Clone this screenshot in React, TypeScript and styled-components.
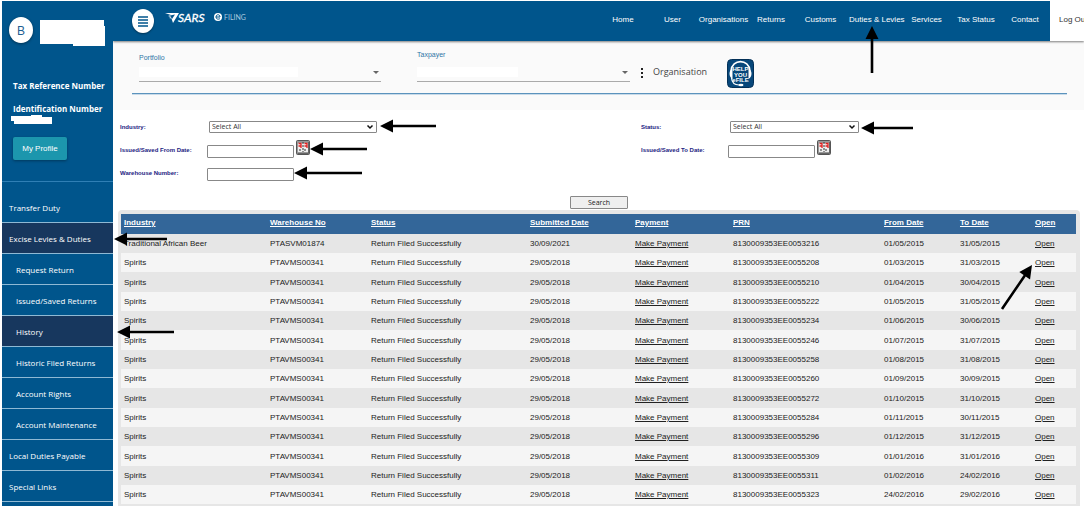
import React from 'react';
import styled, { createGlobalStyle } from 'styled-components';

const arial = '"Liberation Sans", Arial, sans-serif';
const humanist = '"Open Sans", "Noto Sans", sans-serif';

const Global = createGlobalStyle`
  * { box-sizing: border-box; }
  body { margin: 0; background: #fff; font-family: ${arial}; font-size: 8px; color: #222; }
  button, input, select { font: inherit; }
  a { color: inherit; }
`;

const Page = styled.div`
  position: relative;
  display: flex;
  height: 100vh;
  padding: 1px 3px 6px 2px;
  overflow: hidden;
`;

const Sidebar = styled.aside`
  flex: 0 0 111px;
  background: #00558c;
  color: #fff;
  overflow: hidden;
  font-family: ${humanist};
`;

const Profile = styled.section`
  display: flex;
  flex-direction: column;
  align-items: flex-start;
  height: 181px;
  padding: 14px 6px 0 7px;
  border-bottom: 1px solid #2f7fb5;
`;

const Identity = styled.div`
  display: flex;
  gap: 7px;
  height: 59px;
`;

const Avatar = styled.div`
  width: 24px;
  height: 26px;
  margin-top: 2px;
  border-radius: 50%;
  background: #fff;
  color: #1d5f92;
  font: 12px/28px ${arial};
  text-align: center;
  box-shadow: 0 1px 3px rgba(0, 0, 0, 0.4);
`;

const FieldName = styled.p`
  margin: 0;
  padding: 0 4px;
  font-size: 8px;
  font-weight: 700;
  line-height: 23px;
  white-space: nowrap;
`;

const HiddenNumber = styled.svg`
  display: block;
  margin: -5px 0 12px 2px;
`;

const ProfileButton = styled.button`
  width: 54px;
  height: 23px;
  margin-left: 4px;
  padding: 0;
  border: 0;
  border-radius: 2px;
  background: #1c96ad;
  color: #fff;
  font-family: ${arial};
  font-size: 8px;
  box-shadow: 0 1px 3px rgba(0, 0, 0, 0.35);
`;

const SideNav = styled.nav`
  padding-top: 10px;
`;

const SideLink = styled.a<{ $sub?: boolean; $active?: boolean }>`
  display: block;
  height: 31px;
  padding-left: ${(p) => (p.$sub ? 14 : 7)}px;
  border-bottom: 1px solid #8fb9d4;
  background: ${(p) => (p.$active ? '#17375e' : 'transparent')};
  font-size: 8px;
  line-height: 32px;
  text-decoration: none;
  white-space: nowrap;
`;

const Main = styled.main`
  flex: 1;
  min-width: 0;
  overflow: hidden;
`;

const TopBar = styled.header`
  position: relative;
  display: flex;
  height: 40px;
  background: #00558c;
  color: #fff;
  box-shadow: 0 1px 2px rgba(0, 0, 0, 0.5);
`;

const Brand = styled.div`
  display: flex;
  flex: 1;
  gap: 11px;
  padding: 8px 0 0 19px;
`;

const MenuButton = styled.button`
  width: 22px;
  height: 24px;
  padding: 0;
  border: 0;
  border-radius: 50%;
  background: #fff;
  box-shadow: 0 1px 2px rgba(0, 0, 0, 0.4);
  svg { display: block; margin: 0 auto; }
`;

const TopNav = styled.nav`
  display: grid;
  grid-template-columns: 50px 49px 53px 42px 57px 52px 51px 48px 50px;
  font-size: 8px;
  line-height: 38px;
  text-align: center;
  white-space: nowrap;
  a { text-decoration: none; }
`;

const LogOut = styled.a`
  width: 34px;
  padding-left: 9px;
  overflow: hidden;
  background: #fff;
  color: #333;
  font: 8px/38px ${arial};
  white-space: nowrap;
  text-decoration: none;
`;

const Context = styled.section`
  height: 69px;
  padding: 10px 17px 0 19px;
  background: #fafafa;
`;

const ContextRow = styled.div`
  display: flex;
  height: 43px;
  padding-left: 7px;
  border-bottom: 1px solid #5b93bd;
  box-shadow: 0 1px #c9dbe9;
`;

const Picker = styled.div<{ $w: number; $top: number; $gap: number }>`
  display: flex;
  flex-direction: column;
  justify-content: space-between;
  width: ${(p) => p.$w}px;
  height: 31px;
  margin-right: ${(p) => p.$gap}px;
  padding-top: ${(p) => p.$top}px;
  border-bottom: 1px solid #aaa;
  color: #2f76a6;
  font: 7px/8px ${arial};
`;

const PickerValue = styled.div`
  display: flex;
  align-items: center;
  justify-content: space-between;
  height: 18px;
`;

const Blank = styled.span<{ $w: number }>`
  width: ${(p) => p.$w}px;
  height: 10px;
  background: #fff;
`;

const Caret = styled.span`
  margin-right: 2px;
  border: 3px solid transparent;
  border-top-color: #666;
  border-bottom: 0;
`;

const OrgLabel = styled.span`
  margin: 0 20px 0 9px;
  color: #444;
  font: 9px/42px ${humanist};
`;

const HelpSlot = styled.div`
  padding-top: 8px;
`;

const Filters = styled.form`
  display: grid;
  grid-template-columns: 521px 1fr;
  padding: 5px 3px 0 7px;
`;

const Field = styled.div`
  display: flex;
  align-items: center;
  height: 23px;
`;

const Label = styled.label`
  width: 87px;
  color: #22227f;
  font: bold 6px/10px ${arial};
  white-space: nowrap;
`;

const SelectBox = styled.div<{ $w: number }>`
  display: flex;
  align-items: center;
  width: ${(p) => p.$w}px;
  margin-left: 2px;
  select {
    width: 100%;
    height: 12px;
    padding: 0 2px;
    border: 1px solid #888;
    border-radius: 1px;
    background: #fff;
    color: #333;
    appearance: none;
    font: 7px/9px ${humanist};
  }
  svg { flex: none; margin-left: -11px; pointer-events: none; }
`;

const TextBox = styled.input`
  width: 87px;
  height: 13px;
  margin-top: 4px;
  padding: 0 2px;
  border: 1px solid #888;
  border-radius: 1px;
  background: #fff;
`;

const CalendarButton = styled.button`
  display: block;
  margin: 0 0 4px 2px;
  padding: 0;
  border: 0;
  background: none;
  svg { display: block; }
`;

const SearchButton = styled.button`
  display: block;
  width: 58px;
  height: 13px;
  margin: 12px auto 1px 457px;
  padding: 0;
  border: 1px solid #888;
  border-radius: 1px;
  background: #efefef;
  color: #222;
  font: 7px/10px ${humanist};
`;

const TableFrame = styled.div`
  margin: 0 4px 0 5px;
  padding: 4px 4px 4px 3px;
  border-radius: 4px 4px 0 0;
  background: #e6e6e6;
`;

const Table = styled.table`
  width: 100%;
  border-collapse: collapse;
  table-layout: fixed;
  font: 8px/19px ${arial};
  color: #222;
  white-space: nowrap;
  th, td { height: 19px; padding: 0 0 0 3px; text-align: left; }
  th { height: 20px; padding-bottom: 2px; background: #336699; color: #fff; line-height: 18px; }
  tbody tr:nth-child(even) { background: #f5f5f5; }
  tbody tr:nth-child(3n) td { height: 20px; }
`;

const Annotations = styled.svg`
  position: absolute;
  top: 0;
  left: 0;
  pointer-events: none;
`;

const columns: [string, number][] = [
  ['Industry', 146], ['Warehouse No', 101], ['Status', 159], ['Submitted Date', 105],
  ['Payment', 98], ['PRN', 151], ['From Date', 76], ['To Date', 75], ['Open', 44],
];

const rows: string[][] = [
  ['53216', '01/05/2015', '31/05/2015'],
  ['55208', '01/03/2015', '31/03/2015'],
  ['55210', '01/04/2015', '30/04/2015'],
  ['55222', '01/05/2015', '31/05/2015'],
  ['55234', '01/06/2015', '30/06/2015'],
  ['55246', '01/07/2015', '31/07/2015'],
  ['55258', '01/08/2015', '31/08/2015'],
  ['55260', '01/09/2015', '30/09/2015'],
  ['55272', '01/10/2015', '31/10/2015'],
  ['55284', '01/11/2015', '30/11/2015'],
  ['55296', '01/12/2015', '31/12/2015'],
  ['55309', '01/01/2016', '31/01/2016'],
  ['55311', '01/02/2016', '24/02/2016'],
  ['55323', '24/02/2016', '29/02/2016'],
];

const sideItems: { text: string; sub?: boolean; active?: boolean }[] = [
  { text: 'Transfer Duty' },
  { text: 'Excise Levies & Duties', active: true },
  { text: 'Request Return', sub: true },
  { text: 'Issued/Saved Returns', sub: true },
  { text: 'History', sub: true, active: true },
  { text: 'Historic Filed Returns', sub: true },
  { text: 'Account Rights', sub: true },
  { text: 'Account Maintenance', sub: true },
  { text: 'Local Duties Payable' },
  { text: 'Special Links' },
];

const navItems = ['Home', 'User', 'Organisations', 'Returns', 'Customs', 'Duties & Levies', 'Services', 'Tax Status', 'Contact'];

// Tail x/y followed by tip x/y
const arrows: [number, number, number, number][] = [
  [872, 73, 872, 26],
  [436, 126, 380, 126],
  [367, 149, 310, 149],
  [362, 173, 294, 173],
  [913, 128, 861, 128],
  [167, 239, 114, 239],
  [174, 332, 117, 332],
  [1002, 309, 1032, 265],
];

function Arrow({ points: [x1, y1, x2, y2] }: { points: [number, number, number, number] }) {
  const length = Math.hypot(x2 - x1, y2 - y1);
  const angle = (Math.atan2(y2 - y1, x2 - x1) * 180) / Math.PI;
  return (
    <g transform={`translate(${x1} ${y1}) rotate(${angle})`}>
      <path d={`M0 -1.3H${length - 13}V-6.5L${length} 0L${length - 13} 6.5V1.3H0Z`} fill="#000" />
    </g>
  );
}

function Logo() {
  return (
    <svg width="86" height="18" viewBox="0 0 86 18" aria-label="SARS eFiling">
      <path d="M0 4L14 4L8 14L6.500 9.500L4 9L6 8L3 7L6 6Z" fill="#fff" />
      <path d="M5 6.500L10 5.500L7 10Z" fill="#00558c" />
      <text x="13" y="13" fill="#fff" stroke="#fff" strokeWidth="0.3" fontFamily="Lato" fontSize="12" fontStyle="italic">SARS</text>
      <circle cx="53" cy="8" r="4" fill="#fff" />
      <path d="M51 8H55C55 5 51 5 51 8C51 10.500 54 10.500 55 9.500" fill="none" stroke="#00558c" strokeWidth="1" />
      <text x="59" y="11" fill="#a9c9df" fontFamily="Lato" fontSize="7">FILING</text>
    </svg>
  );
}

function HelpIcon() {
  return (
    <svg width="27" height="29" viewBox="0 0 27 29" aria-label="Help you eFile">
      <rect x="0.500" y="0.500" width="26" height="28" rx="4" fill="#07477a" stroke="#033057" />
      <path d="M4 12C5 -0.500 22 -0.500 23 12" fill="none" stroke="#fff" strokeWidth="1.600" />
      <path d="M5.500 10C1.500 11 1.500 18 5.500 20ZM21.500 10C25.500 11 25.500 18 21.500 20Z" fill="#fff" />
      <path d="M4.500 19C5 24 8 26 12 26" fill="none" stroke="#fff" strokeWidth="1.200" />
      <ellipse cx="14" cy="26" rx="2.500" ry="1.300" fill="#fff" />
      <g fill="#fff" fontFamily="Liberation Sans" fontWeight="700" fontSize="6" textAnchor="middle">
        <text x="13.500" y="12">HELP</text>
        <text x="13.500" y="17.500">YOU</text>
        <text x="13.500" y="23">eFILE</text>
      </g>
    </svg>
  );
}

function Calendar() {
  return (
    <CalendarButton type="button" aria-label="Choose date">
      <svg width="14" height="15" viewBox="0 0 14 15">
        <rect x="0.500" y="0.500" width="13" height="14" rx="1" fill="#999" stroke="#555" />
        <rect x="2" y="3" width="10" height="9" fill="#eee" />
        <path d="M2.500 3.500H5V8M2.500 6H5M8.500 3.500H11V8M8.500 6H11" stroke="#e02020" strokeWidth="1.300" fill="none" />
        <path d="M7 2V12M3 10H6M8 10H11" stroke="#333" strokeWidth="1" strokeDasharray="2 1" />
        <path d="M1.500 13.500H12.500V2" fill="none" stroke="#666" />
      </svg>
    </CalendarButton>
  );
}

function SelectField({ id, width }: { id: string; width: number }) {
  return (
    <SelectBox $w={width}>
      <select id={id}><option>Select All</option></select>
      <svg width="8" height="6" viewBox="0 0 8 6"><path d="M1.500 1.500L4 4L6.500 1.500" fill="none" stroke="#111" strokeWidth="1.500" /></svg>
    </SelectBox>
  );
}

export default function App() {
  return (
    <Page>
      <Global />
      <Sidebar>
        <Profile>
          <Identity>
            <Avatar>B</Avatar>
            <svg width="66" height="32" viewBox="0 0 66 32"><path d="M0 5H64V11H65V31H33V29H0Z" fill="#fff" /></svg>
          </Identity>
          <FieldName>Tax Reference Number</FieldName>
          <FieldName>Identification Number</FieldName>
          <HiddenNumber width="42" height="10" viewBox="0 0 42 10"><path d="M0 1H20V0H31V2H41V9H3V6H0Z" fill="#fff" /></HiddenNumber>
          <ProfileButton type="button">My Profile</ProfileButton>
        </Profile>
        <SideNav>
          {sideItems.map((item) => (
            <SideLink key={item.text} href="#" $sub={item.sub} $active={item.active}>{item.text}</SideLink>
          ))}
        </SideNav>
      </Sidebar>
      <Main>
        <TopBar>
          <Brand>
            <MenuButton type="button" aria-label="Menu">
              <svg width="12" height="12" viewBox="0 0 12 12"><path d="M1 2H11M1 5H11M1 8H11M1 11H11" stroke="#00558c" strokeWidth="1.300" /></svg>
            </MenuButton>
            <Logo />
          </Brand>
          <TopNav>{navItems.map((n) => <a key={n} href="#">{n}</a>)}</TopNav>
          <LogOut href="#">Log Out</LogOut>
        </TopBar>
        <Context>
          <ContextRow>
            <Picker $w={242} $top={3} $gap={36}>
              Portfolio
              <PickerValue><Blank $w={159} /><Caret /></PickerValue>
            </Picker>
            <Picker $w={213} $top={0} $gap={10}>
              Taxpayer
              <PickerValue><Blank $w={101} /><Caret /></PickerValue>
            </Picker>
            <svg width="4" height="42" viewBox="0 0 4 42"><path d="M1 17H3V19H1ZM1 21H3V23H1ZM1 25H3V27H1Z" fill="#222" /></svg>
            <OrgLabel>Organisation</OrgLabel>
            <HelpSlot><HelpIcon /></HelpSlot>
          </ContextRow>
        </Context>
        <Filters>
          <Field><Label htmlFor="industry">Industry:</Label><SelectField id="industry" width={168} /></Field>
          <Field><Label htmlFor="status">Status:</Label><SelectField id="status" width={129} /></Field>
          <Field><Label htmlFor="from">Issued/Saved From Date:</Label><TextBox id="from" /><Calendar /></Field>
          <Field><Label htmlFor="to">Issued/Saved To Date:</Label><TextBox id="to" /><Calendar /></Field>
          <Field><Label htmlFor="warehouse">Warehouse Number:</Label><TextBox id="warehouse" /></Field>
        </Filters>
        <SearchButton type="button">Search</SearchButton>
        <TableFrame>
          <Table>
            <colgroup>
              {columns.map(([name, w]) => <col key={name} style={{ width: `${(w / 955) * 100}%` }} />)}
            </colgroup>
            <thead>
              <tr>{columns.map(([name]) => <th key={name}><a href="#">{name}</a></th>)}</tr>
            </thead>
            <tbody>
              {rows.map(([prn, from, to], i) => (
                <tr key={prn}>
                  <td>{i ? 'Spirits' : 'Traditional African Beer'}</td>
                  <td>{i ? 'PTAVMS00341' : 'PTASVM01874'}</td>
                  <td>Return Filed Successfully</td>
                  <td>{i ? '29/05/2018' : '30/09/2021'}</td>
                  <td><a href="#">Make Payment</a></td>
                  <td>8130009353EE00{prn}</td>
                  <td>{from}</td>
                  <td>{to}</td>
                  <td><a href="#">Open</a></td>
                </tr>
              ))}
            </tbody>
          </Table>
        </TableFrame>
      </Main>
      <Annotations width="1087" height="512" aria-hidden="true">
        {arrows.map((a) => <Arrow key={a.join()} points={a} />)}
      </Annotations>
    </Page>
  );
}
